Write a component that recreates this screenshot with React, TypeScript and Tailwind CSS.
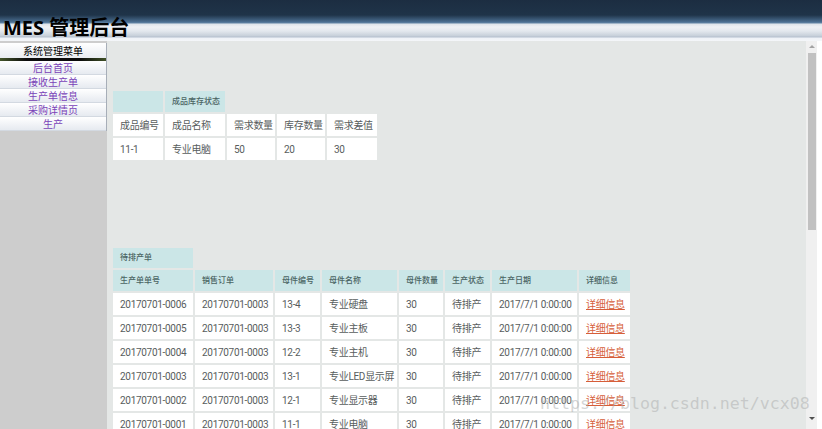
import React from 'react';

const menu = ['后台首页', '接收生产单', '生产单信息', '采购详情页', '生产'];

const orders = [
  ['20170701-0006', '13-4', '专业硬盘'],
  ['20170701-0005', '13-3', '专业主板'],
  ['20170701-0004', '12-2', '专业主机'],
  ['20170701-0003', '13-1', '专业LED显示屏'],
  ['20170701-0002', '12-1', '专业显示器'],
  ['20170701-0001', '11-1', '专业电脑'],
];

const headCell = 'bg-[#cbe6e7] p-0 pl-[7px] text-left align-middle text-[8px] font-medium text-[#4a6463]';
const dataCell = 'bg-white p-0 pl-[7px] text-left align-middle text-[10px] tracking-[-0.3px] text-[#585d5d] whitespace-nowrap';

export default function App() {
  return (
    <div className="relative w-[822px] h-[429px] overflow-hidden bg-white flex flex-col font-['Roboto','Noto_Sans_CJK_SC',sans-serif]">
      {/* 顶部标题栏 */}
      <header className="h-[41px] shrink-0 pl-[3px] pt-[18px] bg-[linear-gradient(to_bottom,#1c2d41_0px,#1f3449_15px,#4b6f92_22px,#6285a6_23px,#dde3ea_24px,#eef1f5_27px,#e3e8ee_31px,#c6cfd9_36px,#b4bfce_37px,#eef2f7_38px,#f4f6f9_41px)]">
        <h1 className="text-[20px] leading-[20px] font-bold text-black font-['Open_Sans','Noto_Sans_CJK_SC',sans-serif]">
          MES 管理后台
        </h1>
      </header>

      <div className="flex flex-1 min-h-0">
        {/* 左侧菜单 */}
        <aside className="w-[107px] shrink-0 bg-[#cdcdcd] pt-[2px] font-['Noto_Sans_CJK_SC',sans-serif]">
          <div className="w-[107px] border-r border-[#a7aeb8]">
            <div className="h-[15px] bg-[linear-gradient(to_bottom,#ffffff,#e9ecf1)] text-center text-[10px] leading-[15px] text-black">
              系统管理菜单
            </div>
            <div className="h-[3px] bg-[linear-gradient(to_right,#44552a,#0c0c0c_25%,#0c0c0c_75%,#3e4f26)]" />
            {menu.map((m) => (
              <div
                key={m}
                className="h-[14px] border-b border-[#d3d9e1] bg-[linear-gradient(to_bottom,#ffffff,#e6eaf0)] text-center text-[10px] leading-[13px] text-[#7a42b8]"
              >
                {m}
              </div>
            ))}
          </div>
        </aside>

        {/* 主内容 */}
        <main className="flex-1 min-w-0 bg-[#e4e7e6] pl-[4px] pt-[48px] overflow-hidden">
          <table className="table-fixed w-[268px] border-separate border-spacing-[2px]">
            <colgroup>
              <col className="w-[50px]" />
              <col className="w-[60px]" />
              <col className="w-[48px]" />
              <col className="w-[48px]" />
              <col className="w-[50px]" />
            </colgroup>
            <tbody>
              <tr className="h-[21px]">
                <td className={headCell} />
                <td className={headCell + ' pl-[6px]'}>成品库存状态</td>
              </tr>
              <tr className="h-[22px]">
                {['成品编号', '成品名称', '需求数量', '库存数量', '需求差值'].map((h) => (
                  <td key={h} className={dataCell}>{h}</td>
                ))}
              </tr>
              <tr className="h-[22px]">
                {['11-1', '专业电脑', '50', '20', '30'].map((v, i) => (
                  <td key={i} className={dataCell}>{v}</td>
                ))}
              </tr>
            </tbody>
          </table>

          <table className="mt-[84px] table-fixed w-[521px] border-separate border-spacing-[2px]">
            <colgroup>
              <col className="w-[80px]" />
              <col className="w-[78px]" />
              <col className="w-[45px]" />
              <col className="w-[75px]" />
              <col className="w-[44px]" />
              <col className="w-[45px]" />
              <col className="w-[85px]" />
              <col className="w-[51px]" />
            </colgroup>
            <tbody>
              <tr className="h-[20px]">
                <td className={headCell}>待排产单</td>
              </tr>
              <tr className="h-[21px]">
                {['生产单单号', '销售订单', '母件编号', '母件名称', '母件数量', '生产状态', '生产日期'].map((h) => (
                  <td key={h} className={headCell}>{h}</td>
                ))}
                <td className={headCell + ' pl-0 text-center'}>详细信息</td>
              </tr>
              {orders.map(([no, code, name]) => (
                <tr key={no} className="h-[22px]">
                  <td className={dataCell}>{no}</td>
                  <td className={dataCell}>20170701-0003</td>
                  <td className={dataCell}>{code}</td>
                  <td className={dataCell}>{name}</td>
                  <td className={dataCell}>30</td>
                  <td className={dataCell}>待排产</td>
                  <td className={dataCell}>2017/7/1 0:00:00</td>
                  <td className={dataCell + ' pl-0 text-center'}>
                    <a className="text-[#d65e39] underline">详细信息</a>
                  </td>
                </tr>
              ))}
            </tbody>
          </table>
        </main>

        {/* 滚动条 */}
        <div className="w-[11px] shrink-0 bg-[#f0f0f0] flex flex-col items-center">
          <div className="h-[11px] flex items-center justify-center">
            <div className="w-0 h-0 border-l-[3px] border-r-[3px] border-b-[3px] border-l-transparent border-r-transparent border-b-[#a3a3a3]" />
          </div>
          <div className="mt-[1px] h-[177px] w-[8px] bg-[#c1c1c1]" />
          <div className="flex-1" />
          <div className="h-[11px] mb-[5px] flex items-center justify-center">
            <div className="w-0 h-0 border-l-[3px] border-r-[3px] border-t-[3px] border-l-transparent border-r-transparent border-t-[#505050]" />
          </div>
        </div>
        <div className="w-[5px] shrink-0 bg-white" />
      </div>

      {/* 水印 */}
      <div className="absolute left-[540px] top-[396px] text-[16.6px] leading-none text-[rgba(170,172,172,0.5)] font-['DejaVu_Sans_Mono','Liberation_Mono',monospace] font-light pointer-events-none">
        https://blog.csdn.net/vcx08
      </div>
    </div>
  );
}
